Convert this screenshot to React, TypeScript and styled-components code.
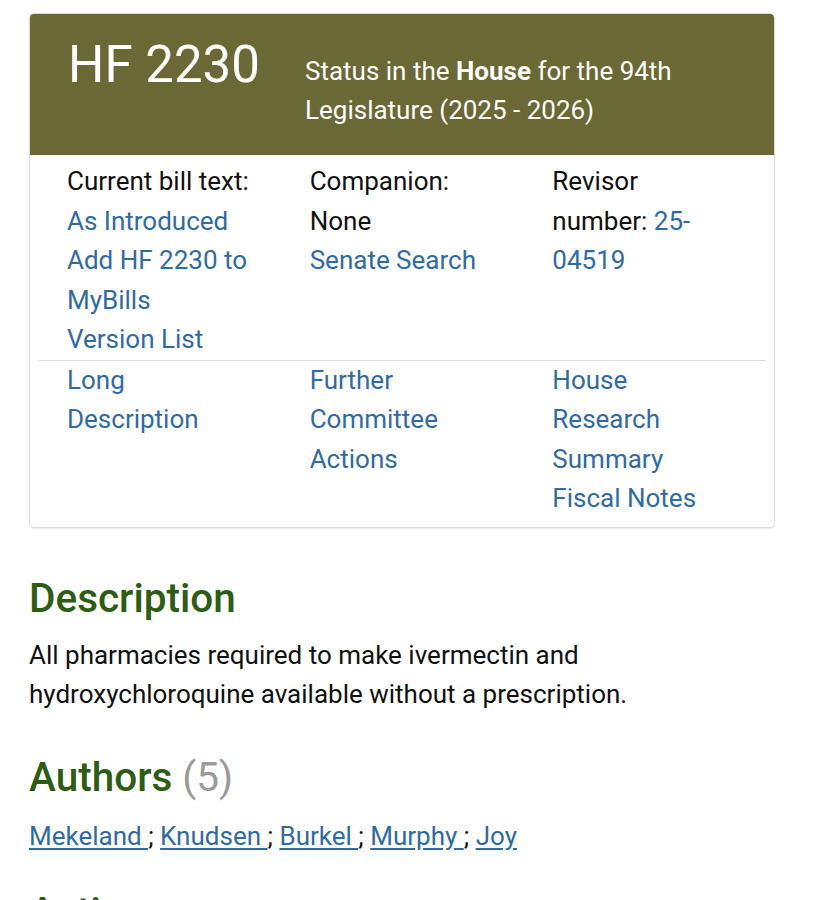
import * as React from "react";
import styled, { createGlobalStyle } from "styled-components";

const GlobalStyle = createGlobalStyle`
  body {
    margin: 0;
    background: #ffffff;
    font-family: Roboto, "Liberation Sans", sans-serif;
    color: #111111;
  }
`;

const Page = styled.div`
  padding: 13px 0 0 29px;
`;

const Card = styled.div`
  width: 746px;
  box-sizing: border-box;
  border: 1px solid #dcdcdc;
  border-radius: 5px;
  overflow: hidden;
  box-shadow: 0 1px 2px rgba(0, 0, 0, 0.08);
`;

const Header = styled.div`
  display: grid;
  grid-template-columns: 275px 1fr;
  height: 141px;
  background: #6a6835;
  color: #ffffff;
  box-sizing: border-box;
`;

const BillNumber = styled.h1`
  margin: 0;
  padding: 23px 0 0 38px;
  font-size: 51px;
  font-weight: 400;
  line-height: 56px;
`;

const Status = styled.div`
  padding-top: 38px;
  font-size: 26px;
  line-height: 39px;
  padding-right: 20px;
`;

const Body = styled.div`
  padding: 0 8px 8px;
`;

type TRow = { divided?: boolean };

const Row = styled.div<TRow>`
  display: grid;
  grid-template-columns: repeat(3, 1fr);
  padding-top: ${props => (props.divided ? "0" : "7px")};
  border-top: ${props => (props.divided ? "1px solid #dddddd" : "none")};
`;

const Col = styled.div`
  padding: 0 29px;
  font-size: 26px;
  line-height: 39.5px;
`;

const Line = styled.div``;

const Link = styled.a`
  color: #2f6ba6;
  text-decoration: none;
`;

const Content = styled.div`
  padding-top: 44px;
  padding-right: 40px;
`;

const Heading = styled.h2`
  margin: 0;
  font-size: 40.5px;
  font-weight: 500;
  line-height: 52px;
  color: #2d5d12;
`;

const Count = styled.span`
  color: #9a9a9a;
  font-weight: 400;
`;

const Paragraph = styled.p`
  margin: 12px 0 37px;
  font-size: 26px;
  line-height: 39px;
`;

const Authors = styled.p`
  margin: 14px 0 30px;
  font-size: 26px;
  line-height: 39px;
`;

const AuthorLink = styled.a`
  color: #2f6ba6;
  text-decoration: underline;
  text-underline-offset: 3px;
`;

const authors = ["Mekeland", "Knudsen", "Burkel", "Murphy", "Joy"];

export default function App() {
  return (
    <Page>
      <GlobalStyle />
      <Card>
        <Header>
          <BillNumber>HF 2230</BillNumber>
          <Status>
            Status in the <b>House</b> for the 94th Legislature (2025 - 2026)
          </Status>
        </Header>
        <Body>
          <Row>
            <Col>
              <Line>Current bill text:</Line>
              <Line><Link href="#">As Introduced</Link></Line>
              <Line><Link href="#">Add HF 2230 to MyBills</Link></Line>
              <Line><Link href="#">Version List</Link></Line>
            </Col>
            <Col>
              <Line>Companion:</Line>
              <Line>None</Line>
              <Line><Link href="#">Senate Search</Link></Line>
            </Col>
            <Col>
              Revisor number: <Link href="#">25-04519</Link>
            </Col>
          </Row>
          <Row divided>
            <Col><Link href="#">Long Description</Link></Col>
            <Col><Link href="#">Further Committee Actions</Link></Col>
            <Col>
              <Line><Link href="#">House Research Summary</Link></Line>
              <Line><Link href="#">Fiscal Notes</Link></Line>
            </Col>
          </Row>
        </Body>
      </Card>
      <Content>
        <Heading>Description</Heading>
        <Paragraph>
          All pharmacies required to make ivermectin and hydroxychloroquine available without a prescription.
        </Paragraph>
        <Heading>
          Authors <Count>(5)</Count>
        </Heading>
        <Authors>
          {authors.map((a, i) => (
            <React.Fragment key={a}>
              <AuthorLink href="#">{i < authors.length - 1 ? a + " " : a}</AuthorLink>
              {i < authors.length - 1 ? "; " : ""}
            </React.Fragment>
          ))}
        </Authors>
        <Heading>Actions</Heading>
      </Content>
    </Page>
  );
}
